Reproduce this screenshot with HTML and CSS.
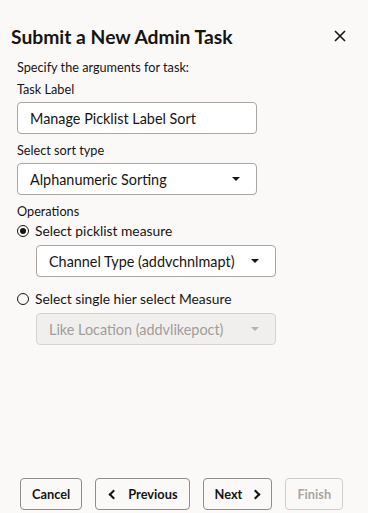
FILE: index.html
```html
<!DOCTYPE html>
<html lang="en">
<head>
  <meta charset="UTF-8">
  <meta name="viewport" content="width=device-width, initial-scale=1.0">
  <title>Submit a New Admin Task</title>
  <link rel="stylesheet" href="styles.css">
</head>
<body>
  <div id="dialog">
    <div class="header">
      <div class="title">Submit a New Admin Task</div>
      <div class="close">
        <svg width="12" height="12" viewBox="0 0 12 12"><path d="M1 1 L11 11 M11 1 L1 11" stroke="#161513" stroke-width="1.6" fill="none"/></svg>
      </div>
    </div>
    <div class="content">
      <div class="intro">Specify the arguments for task:</div>
      <div class="label">Task Label</div>
      <div class="field">Manage Picklist Label Sort</div>
      <div class="label">Select sort type</div>
      <div class="field select">Alphanumeric Sorting<span class="caret"></span></div>
      <div class="label ops">Operations</div>
      <div class="radio-row">
        <span class="radio checked"></span>Select picklist measure
      </div>
      <div class="field select nested">Channel Type (addvchnlmapt)<span class="caret"></span></div>
      <div class="radio-row second">
        <span class="radio"></span>Select single hier select Measure
      </div>
      <div class="field select nested disabled">Like Location (addvlikepoct)<span class="caret"></span></div>
    </div>
    <div class="footer">
      <button class="btn cancel">Cancel</button>
      <button class="btn prev"><span class="chev left"></span>Previous</button>
      <button class="btn next">Next<span class="chev right"></span></button>
      <button class="btn finish" disabled>Finish</button>
    </div>
  </div>
</body>
</html>
```

FILE: styles.css
```css
body {
  margin: 0;
  background: #fbf9f8;
  font-family: Lato, 'Noto Sans', sans-serif;
  color: #161513;
}
#dialog {
  height: 513px;
  display: flex;
  flex-direction: column;
  box-sizing: border-box;
}
.header {
  display: flex;
  justify-content: space-between;
  align-items: center;
  padding: 25px 22px 0 11px;
  height: 22px;
}
.title {
  font-size: 19.3px;
  font-weight: 700;
}
.close {
  display: flex;
}
.content {
  padding: 12px 0 0 17px;
  font-size: 12.7px;
}
.intro {
  line-height: 17px;
  margin-bottom: 5px;
}
.label {
  line-height: 17px;
  margin-bottom: 4px;
}
.field {
  box-sizing: border-box;
  width: 240px;
  height: 32px;
  border: 1px solid #a9a6a3;
  border-radius: 4px;
  background: #fff;
  font-size: 14.4px;
  padding: 0 12px;
  display: flex;
  align-items: center;
  margin-bottom: 8px;
}
.select {
  justify-content: space-between;
}
.caret {
  width: 0;
  height: 0;
  border-left: 4px solid transparent;
  border-right: 4px solid transparent;
  border-top: 4px solid #161513;
  margin-right: 4px;
}
.ops {
  margin-bottom: 2px;
}
.radio-row {
  display: flex;
  align-items: center;
  font-size: 13.8px;
  line-height: 17px;
  margin-bottom: 6px;
}
.radio-row.second {
  margin-top: 13px;
}
.radio {
  box-sizing: border-box;
  width: 12px;
  height: 12px;
  border: 1px solid #161513;
  border-radius: 50%;
  margin-right: 6px;
  display: flex;
  align-items: center;
  justify-content: center;
}
.radio.checked::after {
  content: '';
  width: 6px;
  height: 6px;
  border-radius: 50%;
  background: #161513;
}
.nested {
  margin-left: 19px;
}
.disabled {
  background: #f1efed;
  border-color: #d6d3d0;
  color: #a09d9a;
}
.disabled .caret {
  border-top-color: #b4b1ae;
}
.footer {
  margin-top: auto;
  display: flex;
  gap: 13px;
  padding: 0 0 3px 20px;
}
.btn {
  box-sizing: border-box;
  height: 32px;
  border: 1px solid #8f8c89;
  border-radius: 4px;
  background: #fbf9f8;
  font-family: Lato, 'Noto Sans', sans-serif;
  font-size: 12.8px;
  font-weight: 700;
  color: #161513;
  display: flex;
  align-items: center;
  padding: 0 11px;
}
.chev {
  width: 5px;
  height: 5px;
  border-top: 2px solid #161513;
  border-left: 2px solid #161513;
}
.chev.left {
  transform: rotate(-45deg);
  margin: 0 11px 0 3px;
}
.chev.right {
  transform: rotate(135deg);
  margin: 0 1px 0 10px;
}
.finish {
  border-color: #cfccc9;
  color: #a9a6a3;
}
```
